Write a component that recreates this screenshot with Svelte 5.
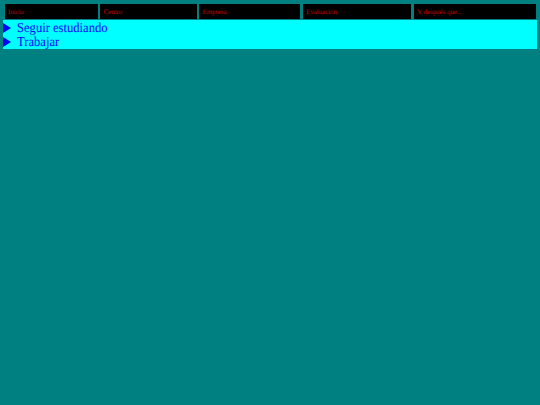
<script>
	const tabs = [
		{ label: 'Inicio', width: 93 },
		{ label: 'Centro', width: 96.5 },
		{ label: 'Empresa', width: 101 },
		{ label: 'Evaluación', width: 108.5 },
		{ label: 'Y después que...', width: 122.5 }
	];
	const options = ['Seguir estudiando', 'Trabajar'];
</script>

<div class="page">
	<nav class="tabs">
		{#each tabs as tab}
			<a href="#top" class="tab" style="width: {tab.width}px">{tab.label}</a>
		{/each}
	</nav>
	<ul class="options">
		{#each options as option}
			<li>
				<svg class="arrow" viewBox="0 0 8 10" width="8" height="10">
					<polygon points="0,0 8,5 0,10" fill="#0000ff" />
				</svg>
				<span>{option}</span>
			</li>
		{/each}
	</ul>
</div>

<style>
	:global(body) {
		margin: 0;
		background: #008080;
	}

	.page {
		min-height: 405px;
		padding: 4px 3px 0;
		box-sizing: border-box;
		background: #008080;
		font-family: "Liberation Serif", "Times New Roman", serif;
	}

	.tabs {
		display: flex;
		justify-content: space-between;
		padding: 0 1px 0 1.5px;
		height: 15px;
	}

	.tab {
		display: block;
		height: 15px;
		line-height: 16px;
		padding-left: 3.5px;
		box-sizing: border-box;
		background: #000;
		color: #c80000;
		font-size: 7px;
		letter-spacing: -0.05px;
		text-decoration: none;
		text-rendering: geometricPrecision;
	}

	.options {
		list-style: none;
		margin: 1px 0 0;
		padding: 1px 0;
		height: 29px;
		box-sizing: border-box;
		background: #00ffff;
	}

	.options li {
		display: flex;
		align-items: center;
		height: 14px;
		color: #0000ff;
		font-size: 12.6px;
		text-rendering: geometricPrecision;
	}

	.options span {
		display: inline-block;
		transform: scaleY(1.08);
	}

	.arrow {
		flex: none;
		margin-right: 6px;
	}
</style>
